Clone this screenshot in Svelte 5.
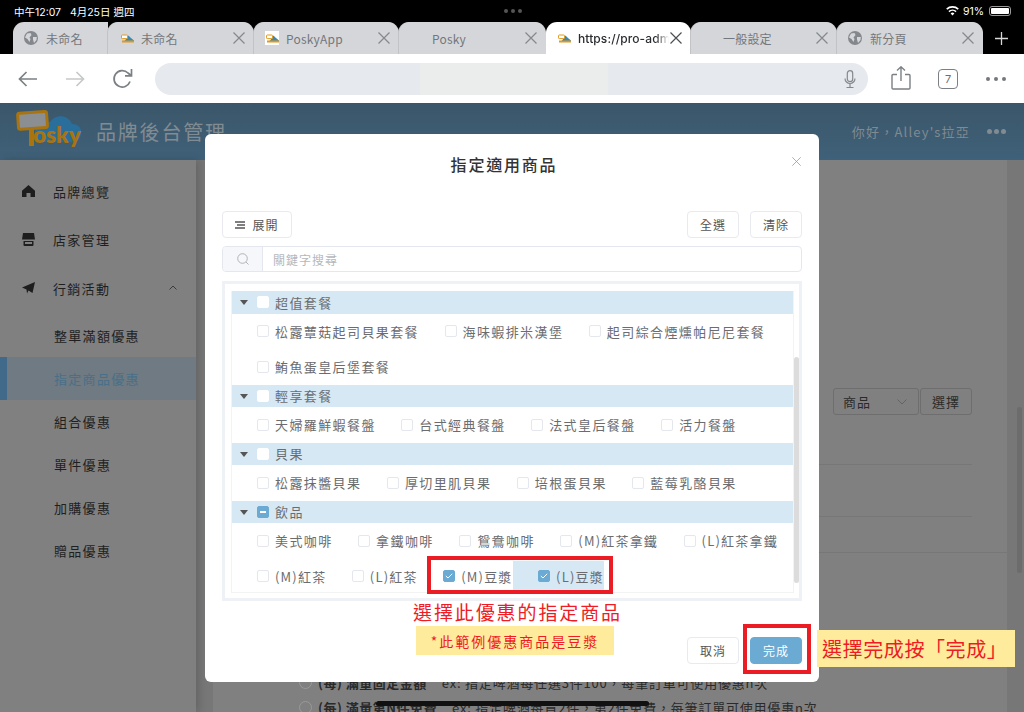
<script>
  const tabs = [
    { title: '未命名', icon: 'globe', w: 95, pad: 11, close: false, first: true },
    { title: '未命名', icon: 'fav', w: 146, pad: 12, close: true },
    { title: 'PoskyApp', icon: 'favbox', w: 145, pad: 11, close: true },
    { title: 'Posky', icon: '', w: 147, pad: 33, close: true },
    { title: 'https://pro-adm', icon: 'fav', w: 145, pad: 11, close: true, active: true },
    { title: '一般設定', icon: '', w: 146, pad: 32, close: true },
    { title: '新分頁', icon: 'globe', w: 146, pad: 11, close: true }
  ];
  const menu = ['整單滿額優惠', '指定商品優惠', '組合優惠', '單件優惠', '加購優惠', '贈品優惠'];
  const groups = [
    { name: '超值套餐', items: ['松露蕈菇起司貝果套餐', '海味蝦排米漢堡', '起司綜合煙燻帕尼尼套餐', '鮪魚蛋皇后堡套餐'] },
    { name: '輕享套餐', items: ['天婦羅鮮蝦餐盤', '台式經典餐盤', '法式皇后餐盤', '活力餐盤'] },
    { name: '貝果', items: ['松露抹醬貝果', '厚切里肌貝果', '培根蛋貝果', '藍莓乳酪貝果'] },
    { name: '飲品', partial: true, items: ['美式咖啡', '拿鐵咖啡', '鴛鴦咖啡', '(M)紅茶拿鐵', '(L)紅茶拿鐵', '(M)紅茶', '(L)紅茶', '(M)豆漿', '(L)豆漿'] }
  ];
  const checked = ['(M)豆漿', '(L)豆漿'];
</script>

<div class="page">
  <div class="status">
    <span class="time">中午12:07&nbsp;&nbsp; 4月25日 週四</span>
    <span class="center-dots"><i></i><i></i><i></i></span>
    <span class="status-right">
      <svg width="13" height="10" viewBox="0 0 13 10"><path d="M6.5 9.6 4.6 7.4a2.8 2.8 0 0 1 3.8 0ZM3.5 6.2 2.4 5a6 6 0 0 1 8.2 0L9.500 6.200a4.400 4.400 0 0 0-6 0ZM1.300 3.800.2 2.600a9.200 9.200 0 0 1 12.600 0l-1.100 1.200a7.600 7.600 0 0 0-10.400 0Z" fill="#fff"/></svg>
      <span>91%</span>
      <span class="battery"><b></b></span>
    </span>
  </div>

  <div class="tabstrip">
    {#each tabs as t}
      <div class="tab" class:active={t.active} class:first={t.first} style="width:{t.w}px;padding-left:{t.pad}px">
        {#if t.icon === 'globe'}
          <svg class="tab-icon" width="14" height="14" viewBox="0 0 14 14"><circle cx="7" cy="7" r="7" fill="#84888d"/><path d="M3 2.500 6.500 2 7.500 4 5.500 6.500 6.500 8 5.500 11 3.500 8 1 6.500ZM9 6h3.800l-.3 3-2.500 3-1-3.500Z" fill="#d5d6da"/></svg>
        {:else if t.icon}
          <span class="fav" class:box={t.icon === 'favbox'}>
            <svg width="13" height="9" viewBox="0 0 13 9"><path d="M4 6.500 7.500 1.500 10 4l3 2.500V8H2Z" fill="#3f86b0"/><rect x=".5" y="1" width="6" height="3.600" rx=".8" fill="#fff" stroke="#e09a1c"/><rect x="1" y="6.500" width="12" height="2" fill="#e09a1c"/></svg>
          </span>
        {/if}
        <span class="tab-title">{t.title}</span>
        {#if t.close}
          <svg class="tab-close" width="12" height="12" viewBox="0 0 12 12"><path d="M.5.500l11 11M11.500.500l-11 11" stroke={t.active ? '#4c4f52' : '#85888c'} stroke-width="1.200"/></svg>
        {/if}
      </div>
    {/each}
    <svg class="plus" width="13" height="13" viewBox="0 0 13 13"><path d="M6.500 0v13M0 6.500h13" stroke="#d8d8d8" stroke-width="1.300"/></svg>
  </div>

  <div class="toolbar">
    <svg class="nav" width="20" height="16" viewBox="0 0 20 16"><path d="M19 8H1.500M8.500 1 1.500 8l7 7" fill="none" stroke="#7b8084" stroke-width="1.700"/></svg>
    <svg class="nav" width="20" height="16" viewBox="0 0 20 16"><path d="M1 8h17.500M11.500 1l7 7-7 7" fill="none" stroke="#c6c8ca" stroke-width="1.700"/></svg>
    <svg class="nav" width="21" height="21" viewBox="0 0 21 21"><path d="M18 13.500A8.200 8.200 0 1 1 16 5L19 7.500M19.500 1v6.800H13" fill="none" stroke="#7b8084" stroke-width="1.700"/></svg>
    <div class="address">
      <span class="url-blur"></span>
      <svg class="mic" width="12" height="19" viewBox="0 0 12 19"><rect x="3.300" y=".7" width="5.400" height="11" rx="2.700" fill="none" stroke="#85898d" stroke-width="1.200"/><path d="M1 8.500a5 5 0 0 0 10 0M6 13.500v3.500M2.500 17.500h7" fill="none" stroke="#85898d" stroke-width="1.200"/></svg>
    </div>
    <svg class="share" width="20" height="24" viewBox="0 0 20 24"><path d="M6 8.500H2a1 1 0 0 0-1 1V22a1 1 0 0 0 1 1h16a1 1 0 0 0 1-1V9.500a1 1 0 0 0-1-1h-4M10 15V1M6 4.500 10 .8l4 3.700" fill="none" stroke="#7b8084" stroke-width="1.400"/></svg>
    <span class="count">7</span>
    <span class="more"><i></i><i></i><i></i></span>
  </div>

  <header class="app-header">
    <svg class="logo" width="68" height="40" viewBox="0 0 68 40">
      <path d="M22 28c-4-12 6-20 14-16 5-8 18-8 22 2 7 0 10 5 9 10-1 6-5 8-10 8H28c-3 0-5-2-6-4Z" fill="#2a6f9c"/>
      <rect x="4" y="2.500" width="29" height="16" rx="2" transform="rotate(-4 18 10)" fill="#8c8f91" stroke="#a9740f" stroke-width="3"/>
      <rect x="15" y="18" width="5" height="18" fill="#a9740f"/>
      <text x="19" y="33" class="logo-text">osky</text>
    </svg>
    <h1>品牌後台管理</h1>
    <span class="hello">你好，Alley's拉亞</span>
    <span class="header-more"><i></i><i></i><i></i></span>
  </header>

  <div class="body">
    <aside class="sidebar">
      <div class="main-item">
        <svg width="13" height="12" viewBox="0 0 13 12"><path d="M6.500 0 13 5.800V12H8.500V8h-4v4H0V5.800Z" fill="#1e1e1e"/></svg>
        <span>品牌總覽</span>
      </div>
      <div class="main-item">
        <svg width="13" height="13" viewBox="0 0 13 13"><path d="M1 0h11l1 6.500H0Z M1.500 8h10v4a1 1 0 0 1-1 1h-8a1 1 0 0 1-1-1Z" fill="#1e1e1e"/><rect x="3" y="9" width="7" height="2" fill="#808080"/></svg>
        <span>店家管理</span>
      </div>
      <div class="main-item">
        <svg width="13" height="12" viewBox="0 0 13 12"><path d="M13 0 10.500 11 6.500 8.500 5 11.500 4.500 7.500 0 5.500ZM4.500 7.500 11 2 6.500 8.500Z" fill="#1e1e1e"/></svg>
        <span>行銷活動</span>
        <svg class="chev" width="8" height="5" viewBox="0 0 8 5"><path d="M.5 4.500 4 1l3.500 3.500" fill="none" stroke="#333" stroke-width=".9"/></svg>
      </div>
      <div class="sub-list">
        {#each menu as m, i}
          <div class="sub-item" class:current={i === 1}>{m}</div>
        {/each}
      </div>
    </aside>

    <main class="content">
      <section class="card">
        <div class="picker">
          <span class="select">商品<svg width="10" height="6" viewBox="0 0 10 6"><path d="M.5.500 5 5 9.500.500" fill="none" stroke="#606060" stroke-width=".9"/></svg></span>
          <span class="pick-btn">選擇</span>
        </div>
        <div class="rule short first"></div>
        <div class="rule short second"></div>
        <div class="rule third"></div>
        <div class="option one"><i></i><b>(每) 滿量固定金額</b><span>ex: 指定啤酒每任選3件100，每筆訂單可使用優惠n次</span></div>
        <div class="option"><i></i><b>(每) 滿量第N件免費</b><span>ex: 指定啤酒每買2件，第2件免費，每筆訂單可使用優惠n次</span></div>
      </section>
    </main>
    <div class="page-scroll"></div>
  </div>

  <div class="mask-modal">
    <div class="modal-head">
      <h2>指定適用商品</h2>
      <svg class="x" width="9" height="9" viewBox="0 0 9 9"><path d="M.3.300l8.400 8.400M8.700.300.300 8.700" stroke="#9a9a9a" stroke-width=".8"/></svg>
    </div>
    <div class="actions">
      <button class="btn expand"><svg width="10" height="8" viewBox="0 0 10 8"><path d="M0 1h10M2 4h8M0 7h10" stroke="#555" stroke-width="1.400"/></svg>展開</button>
      <span class="spacer"></span>
      <button class="btn">全選</button>
      <button class="btn">清除</button>
    </div>
    <div class="search">
      <span class="prepend"><svg width="12" height="12" viewBox="0 0 12 12"><circle cx="5.500" cy="5.500" r="4.800" fill="none" stroke="#a8abb2" stroke-width=".9"/><path d="m9 9 2.500 2.500" stroke="#a8abb2" stroke-width=".9"/></svg></span>
      <span class="placeholder">關鍵字搜尋</span>
    </div>
    <div class="tree">
      <div class="tree-inner">
        {#each groups as g}
          <div class="group">
            <span class="caret"></span>
            <span class="check white" class:partial={g.partial}></span>
            <span>{g.name}</span>
          </div>
          <div class="items">
            {#each g.items as it}
              <div class="item" class:hl={it === '(L)豆漿'} class:latin={it.startsWith('(')}>
                <span class="check" class:on={checked.includes(it)}>
                  {#if checked.includes(it)}
                    <svg width="8" height="6" viewBox="0 0 8 6"><path d="M.8 3 3 5 7.200.8" fill="none" stroke="#fff" stroke-width="1"/></svg>
                  {/if}
                </span>
                <span>{it}</span>
              </div>
            {/each}
          </div>
        {/each}
      </div>
      <span class="tree-scroll"></span>
    </div>
    <div class="footer">
      <button class="btn wide">取消</button>
      <button class="btn wide primary">完成</button>
    </div>
  </div>

  <div class="redbox box-items"></div>
  <div class="redbox box-done"></div>
  <div class="note-title">選擇此優惠的指定商品</div>
  <div class="note-sub">*此範例優惠商品是豆漿</div>
  <div class="note-done">選擇完成按「完成」</div>
  <div class="home-bar"></div>
</div>

<style>
  :global(body) { margin: 0; background: #000; }
  .page {
    position: relative;
    width: 1024px;
    height: 712px;
    overflow: hidden;
    display: flex;
    flex-direction: column;
    font-family: "Noto Sans CJK TC", "Noto Sans", sans-serif;
    color: #606266;
  }
  i { display: block; font-style: normal; }
  button { font-family: inherit; }

  .status {
    height: 22px;
    flex: none;
    background: #000;
    color: #fff;
    font-size: 10.5px;
    display: flex;
    align-items: center;
    padding: 0 13px 0 14px;
    justify-content: space-between;
  }
  .time { width: 200px; font-family: "Inter", "Noto Sans CJK TC", sans-serif; }
  .center-dots { display: flex; gap: 3px; }
  .center-dots i { width: 4px; height: 4px; border-radius: 50%; background: #555; }
  .status-right { width: 200px; display: flex; justify-content: flex-end; align-items: center; gap: 4px; font-family: "Inter", sans-serif; }
  .battery { width: 22px; height: 10px; border: 1px solid #999; border-radius: 3px; padding: 1px; box-sizing: border-box; margin-left: 1px; display: flex; }
  .battery b { flex: 1; background: #fff; border-radius: 1px; }

  .tabstrip {
    height: 32px;
    flex: none;
    background: #000;
    display: flex;
    padding-left: 13px;
    position: relative;
  }
  .tab {
    height: 32px;
    box-sizing: border-box;
    background: #d5d6da;
    border-radius: 11px 11px 0 0;
    display: flex;
    align-items: center;
    position: relative;
    font-size: 12px;
    color: #74777c;
    box-shadow: -1px 0 0 #c2c3c7;
    letter-spacing: .2px;
  }
  .tab.first { border-radius: 11px 0 0 0; box-shadow: none; }
  .tab.active { background: #fff; color: #2b2d30; box-shadow: none; border-radius: 11px 11px 0 0; }
  .tab-icon { margin-right: 8px; flex: none; }
  .fav { width: 14px; height: 14px; margin-right: 7px; display: flex; align-items: center; justify-content: center; flex: none; }
  .fav.box { background: #fff; }
  .tab-title { white-space: nowrap; overflow: hidden; }
  .active .tab-title {
    max-width: 91px;
    font-weight: 500;
    letter-spacing: .1px;
    font-family: "Inter", sans-serif;
    mask-image: linear-gradient(to right, #000 85%, transparent);
  }
  .tab-close { position: absolute; right: 9px; top: 10px; }
  .plus { position: absolute; left: 995px; top: 10px; }

  .toolbar {
    height: 49px;
    flex: none;
    background: #fff;
    display: flex;
    align-items: center;
    padding-left: 18px;
    box-sizing: border-box;
  }
  .nav { margin-right: 27px; flex: none; }
  .nav:nth-of-type(3) { margin-right: 22px; }
  .address {
    width: 713px;
    height: 32px;
    flex: none;
    background: #e6e9ed;
    border-radius: 16px;
    position: relative;
    margin-top: 1px;
  }
  .url-blur { position: absolute; left: 265px; top: 0; width: 188px; height: 32px; background: #ebecec; }
  .mic { position: absolute; right: 12px; top: 7px; }
  .share { margin-left: 23px; margin-bottom: 2px; flex: none; }
  .count {
    width: 20px; height: 20px; box-sizing: border-box; border: 1.300px solid #7b8084; border-radius: 4px;
    margin-left: 27px; font-size: 11px; color: #6b6f73; display: flex; align-items: center; justify-content: center;
    font-family: "Inter", sans-serif; flex: none;
  }
  .more { display: flex; gap: 4px; margin-left: 28px; }
  .more i { width: 4px; height: 4px; border-radius: 50%; background: #74787c; }

  .app-header {
    height: 57px;
    flex: none;
    background: linear-gradient(#3b5669, #3f6179);
    display: flex;
    align-items: center;
    padding-left: 14px;
    box-sizing: border-box;
    color: #818b92;
  }
  .logo { flex: none; margin-top: -3px; overflow: visible; }
  .logo-text { font: 800 22.500px "Lato", "Open Sans", sans-serif; fill: #a9740f; }
  .app-header h1 { margin: 0 0 0 14px; font-size: 20px; font-weight: 400; letter-spacing: 1.800px; flex: 1; }
  .hello { font-size: 13px; letter-spacing: 1.200px; margin-right: 17px; color: #7f8a92; }
  .header-more { display: flex; gap: 2px; margin-right: 18px; }
  .header-more i { width: 5px; height: 5px; border-radius: 50%; background: #818b92; }

  .body { flex: 1; display: flex; background: #777; min-height: 0; position: relative; }
  .sidebar {
    width: 196px;
    flex: none;
    background: #808080;
    box-shadow: 3px 0 8px rgba(0,0,0,.16);
    padding-top: 7px;
    box-sizing: border-box;
    color: #1f1f1f;
    font-size: 13px;
    letter-spacing: 1.300px;
    position: relative;
  }
  .main-item { height: 48.500px; display: flex; align-items: center; padding-left: 22px; position: relative; }
  .main-item svg { width: 13px; margin-right: 18px; flex: none; }
  .main-item .chev { position: absolute; left: 169px; width: 8px; margin: 0; top: 21px; }
  .sub-list { margin-top: 1px; }
  .sub-item { height: 43px; display: flex; align-items: center; padding-left: 54px; box-sizing: border-box; }
  .sub-item.current { background: #6f7a82; color: #4a6f88; border-left: 7px solid #40698a; padding-left: 47px; }

  .content { flex: 1; padding-left: 17px; min-width: 0; }
  .card { width: 794px; height: 100%; background: #808080; box-sizing: border-box; color: #2a2a2a; font-size: 13px; }
  .picker { display: flex; justify-content: flex-end; padding: 228px 35px 0 0; gap: 1px; }
  .select, .pick-btn { height: 27px; box-sizing: border-box; border: 1px solid #6e6e6e; border-radius: 3px; display: flex; align-items: center; letter-spacing: 1px; }
  .select { width: 86px; padding: 0 11px 0 9px; justify-content: space-between; }
  .pick-btn { width: 52px; justify-content: center; }
  .rule { background: #777; height: 1px; }
  .rule.short { margin-right: 35px; }
  .rule.first { margin-top: 49px; }
  .rule.second { margin-top: 51px; }
  .rule.third { margin-top: 35px; }
  .option { display: flex; align-items: center; height: 25px; padding-left: 86px; white-space: nowrap; letter-spacing: .8px; }
  .option.one { margin-top: 117px; }
  .option i { width: 11px; height: 11px; border: 1px solid #999; border-radius: 50%; margin-right: 6px; flex: none; }
  .option b { font-weight: 700; margin-right: 15px; letter-spacing: .5px; }
  .page-scroll { position: absolute; left: 1017px; top: 247px; width: 5px; height: 166px; background: #6c6c6c; border-radius: 3px; }

  .mask-modal {
    position: absolute;
    left: 205px;
    top: 134px;
    width: 614px;
    height: 548px;
    box-sizing: border-box;
    background: #fff;
    border-radius: 6px;
    padding: 0 17px 18px;
    display: flex;
    flex-direction: column;
  }
  .modal-head { height: 77px; flex: none; position: relative; }
  .modal-head h2 { margin: 0; padding: 18px 16px 0 0; text-align: center; font-size: 16px; line-height: 24px; font-weight: 500; letter-spacing: 1.800px; color: #333; }
  .x { position: absolute; right: 1px; top: 23px; }
  .actions { display: flex; gap: 11px; flex: none; }
  .spacer { flex: 1; }
  .btn {
    height: 27px;
    width: 52px;
    box-sizing: border-box;
    border: 1px solid #e8eaf0;
    border-radius: 4px;
    background: #fff;
    font-size: 12px;
    letter-spacing: 1px;
    color: #555;
    padding: 0;
    display: flex;
    align-items: center;
    justify-content: center;
  }
  .btn.expand { width: 70px; gap: 7px; }
  .search {
    height: 26px;
    margin-top: 8px;
    flex: none;
    display: flex;
    border: 1px solid #e4e7ed;
    border-radius: 4px;
    box-sizing: border-box;
    overflow: hidden;
    font-size: 12px;
    letter-spacing: 1px;
    color: #b5b7bc;
    align-items: stretch;
  }
  .prepend { width: 39px; background: #f5f7fa; border-right: 1px solid #e4e7ed; display: flex; align-items: center; justify-content: center; }
  .placeholder { padding-left: 10px; display: flex; align-items: center; }
  .tree {
    height: 320px;
    margin-top: 9px;
    flex: none;
    box-sizing: border-box;
    border: 3px solid #eef1f6;
    padding: 7px 5px 5px 6px;
    position: relative;
  }
  .tree-inner {
    height: 100%;
    box-sizing: border-box;
    border-left: 1px solid #f3f3f3;
    border-right: 1px solid #f3f3f3;
    border-bottom: 1px solid #f3f3f3;
    font-size: 13px;
    letter-spacing: 1.400px;
    color: #6a6c70;
  }
  .group {
    height: 22.500px;
    background: #d6e8f3;
    display: flex;
    align-items: center;
    position: relative;
    padding-left: 25px;
    gap: 6px;
  }
  .caret {
    position: absolute;
    left: 8px;
    top: 9px;
    width: 0; height: 0;
    border-left: 4px solid transparent;
    border-right: 4px solid transparent;
    border-top: 5px solid #555;
  }
  .items { display: flex; flex-wrap: wrap; padding-left: 25px; margin-right: -26px; }
  .item { height: 35.500px; display: flex; align-items: center; gap: 6px; margin-right: 25.500px; white-space: nowrap; }
  .item.latin { letter-spacing: 1.200px; }
  .item.hl { background: linear-gradient(transparent 2px, #d6e8f3 2px, #d6e8f3 32px, transparent 32px); margin-left: -25.500px; padding-left: 25.500px; margin-right: 0; }
  .check {
    width: 12px; height: 12px; box-sizing: border-box;
    border: 1px solid #e4e7ed; border-radius: 2px; background: #fff; flex: none;
    display: flex; align-items: center; justify-content: center;
  }
  .check.white { border-color: #fff; }
  .check.on { background: #6aaad3; border-color: #6aaad3; }
  .check.partial { background: #6aaad3; border-color: #6aaad3; position: relative; }
  .check.partial::after { content: ""; width: 6px; height: 1.500px; background: #fff; }
  .tree-scroll { position: absolute; left: 569px; top: 73px; width: 5px; height: 226px; background: #dcdcdc; border-radius: 3px; }
  .footer { margin-top: auto; display: flex; justify-content: flex-end; gap: 11px; }
  .btn.primary { background: #6aaad3; border-color: #6aaad3; color: #fff; }

  .redbox { position: absolute; border: 4px solid #ec1c24; box-sizing: border-box; }
  .box-items { left: 427px; top: 556px; width: 186px; height: 38px; }
  .box-done { left: 743px; top: 624px; width: 68px; height: 50px; }
  .note-title { position: absolute; left: 413px; top: 599px; font-size: 19px; line-height: 26px; letter-spacing: 1.900px; color: #ee1c25; white-space: nowrap; }
  .note-sub { position: absolute; left: 416px; top: 626px; width: 198px; height: 29px; background: #ffeb9c; color: #ee1c25; font-size: 14px; letter-spacing: 2px; display: flex; align-items: center; justify-content: center; white-space: nowrap; }
  .note-done { position: absolute; left: 817px; top: 630px; width: 198px; height: 37px; box-sizing: border-box; background: #ffeb9c; color: #ee1c25; font-size: 20px; letter-spacing: .6px; padding-left: 5px; display: flex; align-items: center; white-space: nowrap; }
  .home-bar { position: absolute; left: 376px; top: 701px; width: 273px; height: 5px; border-radius: 3px; background: #111; }
</style>
